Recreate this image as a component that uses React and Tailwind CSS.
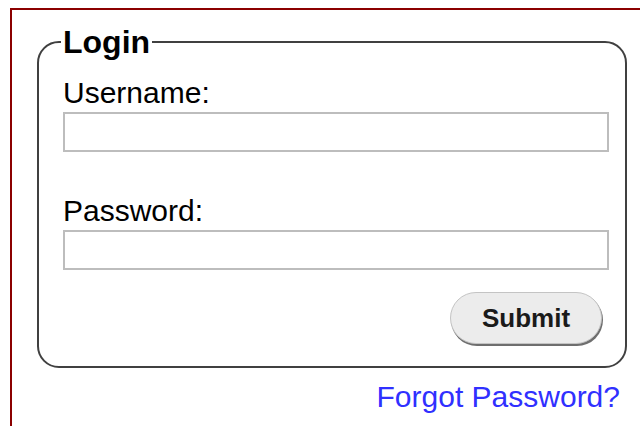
import React, { useState } from 'react';

function App() {
  const [username, setUsername] = useState('');
  const [password, setPassword] = useState('');

  const handleSubmit = (e) => {
    e.preventDefault();
  };

  return (
    <div
      className="min-h-[426px] bg-white pt-[8px] pl-[10px]"
      style={{ fontFamily: '"Liberation Sans", Arial, sans-serif' }}
    >
      <div className="min-h-[418px] border-t-2 border-l-2 border-[#8b0000] pt-[14px] pl-[25px]">
        <form onSubmit={handleSubmit} className="w-[590px]">
          <fieldset className="rounded-[22px] border-2 border-[#404040] pl-[24px] pr-[16px] pt-[16px] pb-[22px]">
            <legend className="-ml-[2px] px-[2px] text-[32px] font-bold leading-[36px] text-black">
              Login
            </legend>

            <label htmlFor="username" className="mb-[2px] block text-[30px] leading-[34px] text-black">
              Username:
            </label>
            <input
              id="username"
              type="text"
              value={username}
              onChange={(e) => setUsername(e.target.value)}
              className="block h-[40px] w-[546px] border-2 border-[#bdbdbd] bg-white px-2 text-[24px] outline-none"
            />

            <label htmlFor="password" className="mt-[42px] mb-[2px] block text-[30px] leading-[34px] text-black">
              Password:
            </label>
            <input
              id="password"
              type="password"
              value={password}
              onChange={(e) => setPassword(e.target.value)}
              className="block h-[40px] w-[546px] border-2 border-[#bdbdbd] bg-white px-2 text-[24px] outline-none"
            />

            <div className="mt-[22px] flex justify-end pr-[7px]">
              <button
                type="submit"
                className="h-[52px] w-[152px] rounded-full border border-[#c4c4c4] bg-[#ececec] text-[26px] font-bold text-[#1a1a1a] shadow-[1px_2px_0_#6e6e6e]"
              >
                Submit
              </button>
            </div>
          </fieldset>

          <div className="mt-[12px] flex justify-end pr-[7px]">
            <a href="#" className="text-[30px] leading-[34px] text-[#3030ff]">
              Forgot Password?
            </a>
          </div>
        </form>
      </div>
    </div>
  );
}

export default App;
